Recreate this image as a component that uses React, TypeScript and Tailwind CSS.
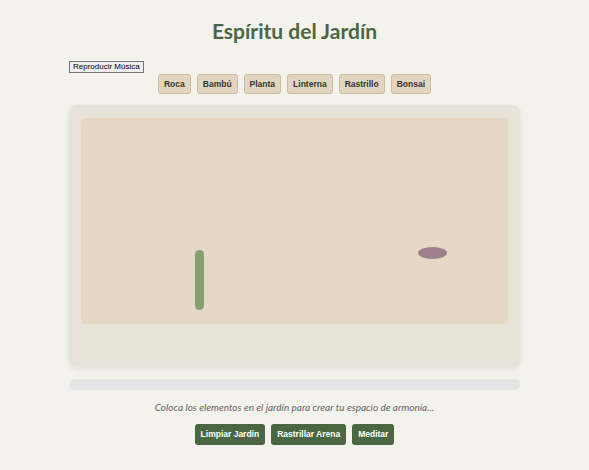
export default function App() {
  const tools = ["Roca", "Bambú", "Planta", "Linterna", "Rastrillo", "Bonsai"];
  const actions = ["Limpiar Jardín", "Rastrillar Arena", "Meditar"];

  return (
    <div className="min-h-[470px] bg-[#f4f2ed] font-['Lato',sans-serif]">
      <div className="mx-auto w-[451px] pt-[16px]">
        <h1 className="text-center text-[21px] font-bold leading-[29px] text-[#4a6741]">
          Espíritu del Jardín
        </h1>

        {/* Música */}
        <button className="mt-[16px] block border border-[#767676] bg-[#efefef] px-[3px] font-['Liberation_Sans',sans-serif] text-[8px] leading-[10px] text-black">
          Reproducir Música
        </button>

        {/* Herramientas */}
        <div className="mt-px flex justify-center gap-[6px]">
          {tools.map((t) => (
            <button
              key={t}
              className="h-[20px] rounded-[3px] border border-[#cbbd9f] bg-[#e3d6c1] px-[5px] font-['Liberation_Sans',sans-serif] text-[8.5px] font-bold text-[#333]"
            >
              {t}
            </button>
          ))}
        </div>

        {/* Jardín */}
        <div className="mt-[11px] rounded-[8px] bg-[#e8e3d8] px-[12px] pb-[43px] pt-[13px] shadow-[0_2px_6px_rgba(0,0,0,0.08)]">
          <div className="relative h-[206px] rounded-[4px] bg-[#e5d9c6]">
            <div className="absolute left-[114px] top-[132px] h-[60px] w-[9px] rounded-full bg-[#86a070]" />
            <div className="absolute left-[337px] top-[129px] h-[12px] w-[29px] rounded-[50%] bg-[#9e7f8d]" />
          </div>
        </div>

        <div className="mt-[12px] h-[11px] rounded-full bg-[#e5e5e5]" />

        <p className="mt-[10px] text-center text-[10px] italic leading-[14px] text-[#666]">
          Coloca los elementos en el jardín para crear tu espacio de armonía...
        </p>

        <div className="mt-[10px] flex justify-center gap-[6px]">
          {actions.map((a) => (
            <button
              key={a}
              className="h-[21px] rounded-[3px] bg-[#4a6741] px-[6px] font-['Liberation_Sans',sans-serif] text-[8.5px] font-bold text-white"
            >
              {a}
            </button>
          ))}
        </div>
      </div>
    </div>
  );
}
